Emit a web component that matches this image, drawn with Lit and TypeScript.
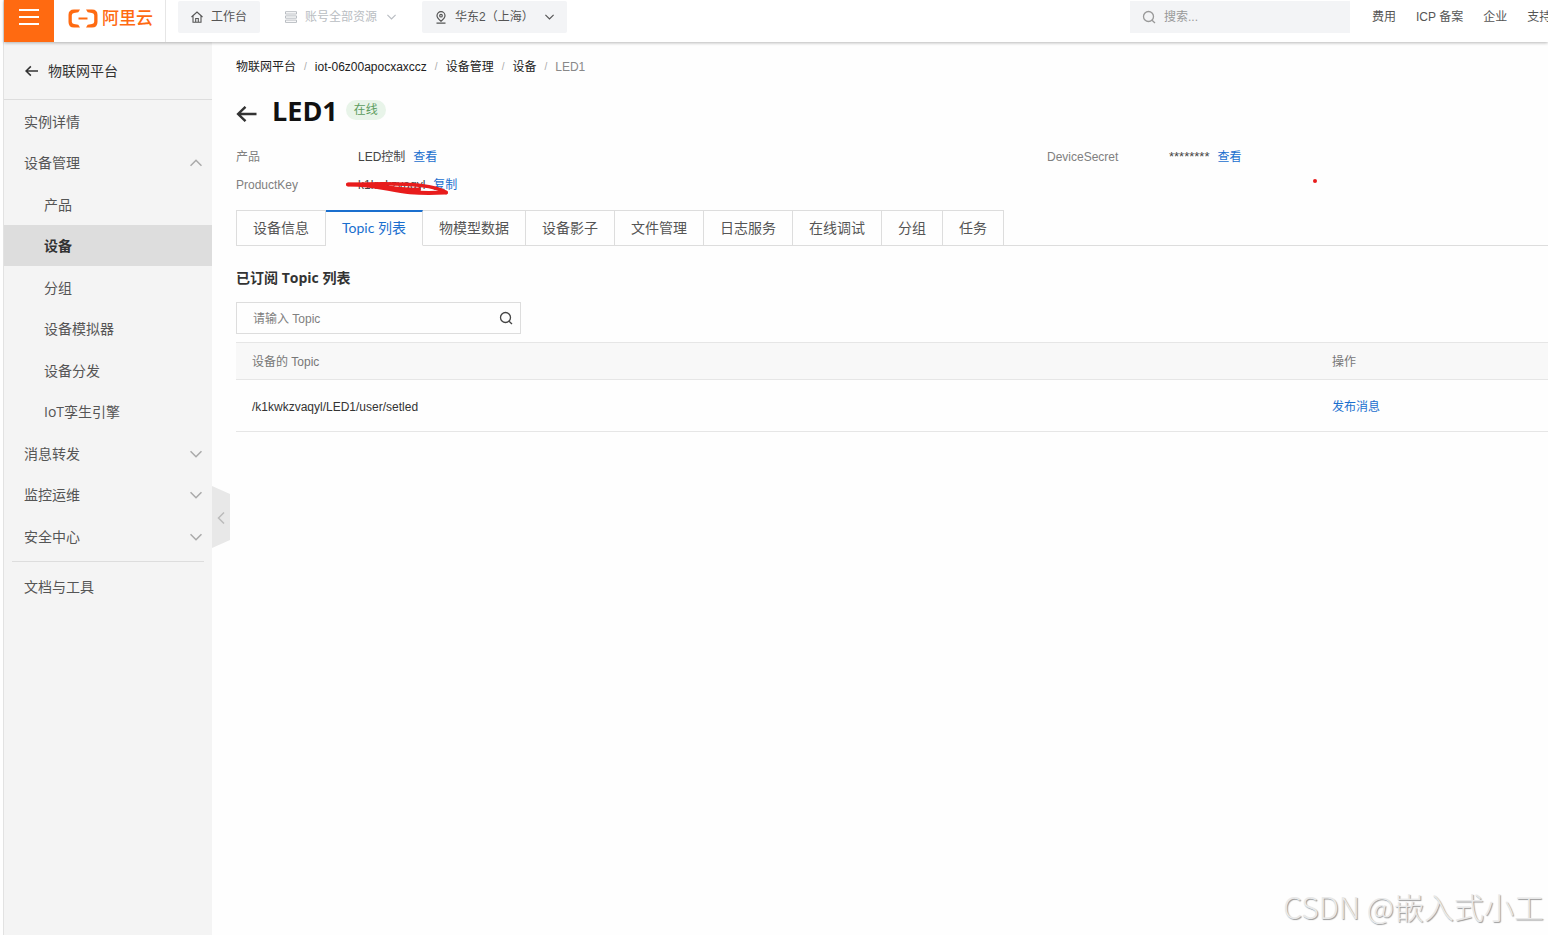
import { LitElement, html, css, svg, nothing } from "lit";
import { customElement, property, state } from "lit/decorators.js";

const chevron = (d: string) => html`
  <svg class="chevron" viewBox="0 0 12 12" width="12" height="12" fill="none" stroke="currentColor" stroke-width="1.6" aria-hidden="true">
    ${svg`<path d=${d}></path>`}
  </svg>
`;
const DOWN = "M0.5 3.2 6 8.7 11.5 3.2";
const UP = "M0.5 8.8 6 3.3 11.5 8.8";

const backArrow = (w: number, h: number) => html`
  <svg viewBox="0 0 20 16" width=${w} height=${h} fill="none" stroke="currentColor" stroke-width="2.4" aria-hidden="true">
    <path d="M9 0.8 1.6 8 9 15.2M1.8 8H20"></path>
  </svg>
`;

const magnifier = html`
  <svg viewBox="0 0 14 14" width="14" height="14" fill="none" stroke="currentColor" stroke-width="1.3" aria-hidden="true">
    <circle cx="6.5" cy="6.5" r="5"></circle>
    <path d="M10 10.2 13 13"></path>
  </svg>
`;

@customElement("top-bar")
class TopBar extends LitElement {
  static styles = css`
    :host {
      display: flex;
      position: relative;
      z-index: 2;
      height: 42px;
      overflow: visible;
      background: #fff;
      box-shadow: 0 1px 3px rgba(0, 0, 0, 0.28);
      font: 12px/32px "Liberation Sans", "Noto Sans CJK SC", sans-serif;
      color: #555;
    }
    button {
      font: inherit;
      color: inherit;
      border: 0;
      padding: 0;
      background: none;
      cursor: pointer;
    }
    a {
      color: inherit;
      text-decoration: none;
      white-space: nowrap;
    }
    .menu {
      flex: none;
      display: flex;
      justify-content: center;
      width: 50px;
      padding-top: 8px;
      background: #ff6a11;
    }
    .logo {
      flex: none;
      display: flex;
      align-items: center;
      gap: 4px;
      width: 112px;
      box-sizing: border-box;
      padding: 0 0 5px 14px;
      border-right: 1px solid #e6e6e6;
      color: #ff6a11;
      font-size: 17px;
      font-weight: 500;
    }
    .tools {
      display: flex;
      gap: 12px;
      padding: 1px 12px;
    }
    .tool {
      display: flex;
      align-items: center;
      gap: 8px;
      height: 32px;
      padding: 0 13px;
      border-radius: 2px;
      background: #f3f4f6;
      white-space: nowrap;
    }
    .plain {
      background: none;
      color: #b9bdc2;
      padding: 0 14px 0 13px;
    }
    .tool .chevron {
      width: 9px;
      margin-left: 2px;
    }
    .region .chevron {
      margin-left: 3px;
    }
    .search {
      display: flex;
      align-items: center;
      gap: 8px;
      width: 220px;
      height: 32px;
      box-sizing: border-box;
      margin: 1px 0 0 auto;
      padding: 0 12px;
      background: #f3f4f6;
      color: #999;
    }
    .search input {
      flex: 1;
      min-width: 0;
      border: 0;
      padding: 0;
      outline: 0;
      background: none;
      font: inherit;
    }
    .search input::placeholder {
      color: #999;
    }
    .links {
      flex: 0 0 198px;
      box-sizing: border-box;
      display: flex;
      gap: 20px;
      padding: 1px 0 0 22px;
      overflow: hidden;
    }
  `;

  render() {
    return html`
      <button class="menu" aria-label="菜单">
        <svg width="20" height="18" viewBox="0 0 20 18" stroke="#fff" stroke-width="2" aria-hidden="true">
          <path d="M0 2H20M0 9H20M0 16H20"></path>
        </svg>
      </button>
      <a class="logo" href="#">
        <svg width="30" height="19" viewBox="0 0 30 19" fill="currentColor" aria-hidden="true">
          <path d="M12 0.5H6Q0.5 0.5 0.5 6V13Q0.5 18.5 6 18.5H12L10.3 15.8 6 15Q3.8 14.6 3.8 12.8V6.2Q3.8 4.4 6 4L10.3 3.2Z"></path>
          <path d="M18 0.5H24Q29.5 0.5 29.5 6V13Q29.5 18.5 24 18.5H18L19.7 15.8 24 15Q26.2 14.6 26.2 12.8V6.2Q26.2 4.4 24 4L19.7 3.2Z"></path>
          <path d="M10.5 8.5H19.5V10.5H10.5Z"></path>
        </svg>
        <span>阿里云</span>
      </a>
      <div class="tools">
        <button class="tool">
          <svg width="12" height="12" viewBox="0 0 12 12" fill="none" stroke="currentColor" stroke-width="1.1" aria-hidden="true">
            <path d="M0.5 6 6 1 11.5 6M2 5V11.3H10V5M4.7 11.3V7.5H7.3V11.3"></path>
          </svg>
          工作台
        </button>
        <button class="tool plain">
          <svg width="12" height="12" viewBox="0 0 12 12" fill="none" stroke="currentColor" aria-hidden="true">
            <path d="M0.5 0.7H11.5V3H0.5ZM0.5 4.9H11.5V7.2H0.5ZM0.5 9.1H11.5V11.4H0.5Z"></path>
          </svg>
          账号全部资源 ${chevron(DOWN)}
        </button>
        <button class="tool region">
          <svg width="12" height="13" viewBox="0 0 12 13" fill="none" stroke="currentColor" stroke-width="1.2" aria-hidden="true">
            <path d="M6 10.2C3.5 8.2 2 6.8 2 4.7A4 4 0 0 1 10 4.7C10 6.8 8.5 8.2 6 10.2ZM1.5 12.2H10.5"></path>
            <circle cx="6" cy="4.7" r="1.3"></circle>
          </svg>
          华东2（上海） ${chevron(DOWN)}
        </button>
      </div>
      <label class="search">${magnifier}<input type="text" placeholder="搜索..." aria-label="搜索" /></label>
      <nav class="links">
        ${["费用", "ICP 备案", "企业", "支持"].map((t) => html`<a href="#">${t}</a>`)}
      </nav>
    `;
  }
}

interface NavEntry {
  label: string;
  open?: boolean;
  group?: boolean;
  children?: string[];
}

const NAV: NavEntry[] = [
  { label: "实例详情" },
  {
    label: "设备管理",
    group: true,
    open: true,
    children: ["产品", "设备", "分组", "设备模拟器", "设备分发", "IoT孪生引擎"],
  },
  { label: "消息转发", group: true },
  { label: "监控运维", group: true },
  { label: "安全中心", group: true },
];

@customElement("side-nav")
class SideNav extends LitElement {
  static styles = css`
    :host {
      display: block;
      position: relative;
      background: #f4f4f4;
      color: #555;
      font: 14px/41px "Open Sans", "Noto Sans CJK SC", sans-serif;
    }
    a {
      display: flex;
      align-items: center;
      justify-content: space-between;
      color: inherit;
      text-decoration: none;
      padding: 0 10px 0 20px;
    }
    .title {
      justify-content: flex-start;
      gap: 10px;
      height: 57px;
      padding-left: 21px;
      border-bottom: 1px solid #ddd;
      color: #333;
    }
    ul {
      list-style: none;
      margin: 0;
      padding: 0;
    }
    .list {
      padding-bottom: 4px;
    }
    li:nth-child(odd) {
      padding-top: 1px;
    }
    .sub a {
      padding-left: 40px;
    }
    .sub .current {
      background: #ddd;
      color: #333;
      font-weight: 700;
    }
    .chevron {
      color: #aaa;
    }
    .docs {
      margin: 0 8px;
      padding: 4px 0 0 12px;
      border-top: 1px solid #ddd;
    }
    .fold {
      position: absolute;
      left: 100%;
      top: 444px;
      width: 18px;
      height: 62px;
      border: 0;
      padding: 0;
      background: #e8e8e8;
      color: #bbb;
      clip-path: polygon(0 0, 100% 8px, 100% 54px, 0 100%);
    }
    .fold svg {
      display: block;
      margin: 2px auto 0;
    }
  `;

  render() {
    return html`
      <a class="title" href="#">${backArrow(13, 12)}物联网平台</a>
      <ul class="list">
        ${NAV.map(
          (n) => html`<li>
            <a href="#">${n.label}${n.group ? chevron(n.open ? UP : DOWN) : nothing}</a>
            ${n.children
              ? html`<ul class="sub">
                  ${n.children.map((c) => html`<li><a class=${c === "设备" ? "current" : ""} href="#">${c}</a></li>`)}
                </ul>`
              : nothing}
          </li>`
        )}
      </ul>
      <a class="docs" href="#">文档与工具</a>
      <button class="fold" aria-label="收起导航">
        <svg width="8" height="12" viewBox="0 0 8 12" fill="none" stroke="currentColor" stroke-width="1.5">
          <path d="M7 0.5 1.5 6 7 11.5"></path>
        </svg>
      </button>
    `;
  }
}

@customElement("device-page")
class DevicePage extends LitElement {
  @state() tab = "Topic 列表";
  @property() name = "LED1";

  static styles = css`
    :host {
      display: block;
      min-width: 0;
      padding: 15px 0 0 24px;
      color: #333;
      font: 12px/20px "Liberation Sans", "Noto Sans CJK SC", sans-serif;
    }
    a {
      color: #1a6fce;
      text-decoration: none;
    }
    .crumbs {
      display: flex;
      gap: 8px;
    }
    .crumbs a {
      color: #222;
    }
    .crumbs span {
      color: #888;
    }
    .crumbs .slash {
      color: #aaa;
      font-size: 10px;
    }
    .heading {
      display: flex;
      align-items: center;
      height: 40px;
      margin-top: 14px;
    }
    .heading .back {
      display: flex;
      margin: 6px 15px 0 0;
      color: #333;
    }
    h1,
    h2 {
      font-family: "Open Sans", "Noto Sans CJK SC", sans-serif;
    }
    h1 {
      margin: 0;
      font-size: 27px;
      line-height: 40px;
      color: #111;
    }
    .status {
      margin: 0 0 2px 8px;
      padding: 0 8px;
      border-radius: 10px;
      background: #e8f4e9;
      color: #5c9c60;
    }
    .facts {
      display: grid;
      grid-template-columns: 811fr 501fr;
      row-gap: 8px;
      margin: 16px 0 0;
    }
    .fact {
      display: flex;
      position: relative;
    }
    dt {
      width: 122px;
      color: #808080;
    }
    dd {
      display: flex;
      gap: 8px;
      margin: 0;
      color: #444;
    }
    .mask {
      font-size: 13px;
    }
    .scribble {
      position: absolute;
      left: 109px;
      top: 4px;
    }
    .dot {
      position: absolute;
      left: 266px;
      top: 32px;
      width: 4px;
      height: 4px;
      border-radius: 2px;
      background: #e81c1c;
    }
    .tabs {
      display: flex;
      margin-top: 15px;
      box-shadow: inset 0 -1px #ddd;
    }
    .tab {
      height: 36px;
      padding: 0 16px;
      border: 1px solid #ddd;
      border-left: 0;
      background: none;
      font: 14px/32px Lato, "Noto Sans CJK SC", sans-serif;
      color: #555;
      white-space: nowrap;
      cursor: pointer;
    }
    .tab:first-child {
      border-left: 1px solid #ddd;
    }
    .tab.active {
      padding-bottom: 1px;
      border-top: 2px solid #1a6fce;
      border-bottom-color: #fefefe;
      color: #1a6fce;
    }
    h2 {
      margin: 22px 0 14px;
      font-size: 14px;
      line-height: 20px;
    }
    .filter {
      display: flex;
      align-items: center;
      width: 285px;
      height: 32px;
      box-sizing: border-box;
      border: 1px solid #ddd;
      padding: 0 7px 0 16px;
      color: #444;
    }
    .filter input {
      flex: 1;
      min-width: 0;
      border: 0;
      padding: 2px 0 0;
      outline: 0;
      background: none;
      font: inherit;
    }
    .filter input::placeholder {
      color: #808080;
    }
    table {
      width: 100%;
      margin-top: 8px;
      border-collapse: collapse;
      table-layout: fixed;
    }
    th,
    td {
      padding: 2px 16px 0;
      border-bottom: 1px solid #e6e6e6;
      text-align: left;
    }
    th {
      height: 34px;
      border-top: 1px solid #e6e6e6;
      background: #f8f8f8;
      color: #777;
      font-weight: 400;
    }
    td {
      height: 49px;
    }
    .ops {
      width: 200px;
    }
  `;

  render() {
    const crumbs = ["物联网平台", "iot-06z00apocxaxccz", "设备管理", "设备"];
    const tabs = ["设备信息", "Topic 列表", "物模型数据", "设备影子", "文件管理", "日志服务", "在线调试", "分组", "任务"];
    return html`
      <nav class="crumbs">
        ${crumbs.map((c) => html`<a href="#">${c}</a><span class="slash">/</span>`)}<span>${this.name}</span>
      </nav>
      <header class="heading">
        <a class="back" href="#" aria-label="返回">${backArrow(21, 16)}</a>
        <h1>${this.name}</h1>
        <span class="status">在线</span>
      </header>
      <dl class="facts">
        <div class="fact"><dt>产品</dt><dd>LED控制 <a href="#">查看</a></dd></div>
        <div class="fact">
          <dt>DeviceSecret</dt><dd><span class="mask">********</span><a href="#">查看</a></dd><i class="dot"></i>
        </div>
        <div class="fact">
          <dt>ProductKey</dt><dd>k1kwkzvaqyl <a href="#">复制</a></dd>
          <svg class="scribble" width="106" height="18" viewBox="0 0 106 18" fill="none" stroke="#e81c1c" stroke-linecap="round" stroke-linejoin="round" aria-hidden="true">
            <path d="M3 5.5C28 4.5 58 4 76 6.5C90 8 97 11 101 13.5" stroke-width="3.5"></path>
            <path d="M3 5.5C28 5 44 11 65 13.2C80 14.5 90 14 101 13.5" stroke-width="4"></path>
            <path d="M32 6.5C48 10 64 11 74 10.5" stroke-width="4"></path>
          </svg>
        </div>
      </dl>
      <div class="tabs" role="tablist">
        ${tabs.map(
          (t) => html`<button
            class="tab ${t === this.tab ? "active" : ""}"
            role="tab"
            aria-selected=${t === this.tab ? "true" : "false"}
            @click=${() => (this.tab = t)}
          >${t}</button>`
        )}
      </div>
      <h2>已订阅 Topic 列表</h2>
      <label class="filter"><input type="text" placeholder="请输入 Topic" aria-label="请输入 Topic" />${magnifier}</label>
      <table>
        <thead>
          <tr><th>设备的 Topic</th><th class="ops">操作</th></tr>
        </thead>
        <tbody>
          <tr><td>/k1kwkzvaqyl/LED1/user/setled</td><td><a href="#">发布消息</a></td></tr>
        </tbody>
      </table>
    `;
  }
}

@customElement("app-root")
class AppRoot extends LitElement {
  static styles = css`
    :host {
      display: flex;
      flex-direction: column;
      position: relative;
      box-sizing: border-box;
      min-height: 100vh;
      padding-left: 3px;
      background: #fefefe;
      overflow: hidden;
    }
    .shell {
      flex: 1;
      display: flex;
      flex-direction: column;
      border-left: 1px solid #e2e2e2;
    }
    .body {
      flex: 1;
      display: grid;
      grid-template-columns: 208px 1fr;
    }
    .watermark {
      position: absolute;
      right: 4px;
      bottom: 7px;
      color: #e9e9e9;
      font: 300 30px/44px "Noto Sans CJK SC", sans-serif;
      text-shadow: 1px 1px 1px #999;
    }
  `;

  render() {
    return html`
      <div class="shell">
        <top-bar></top-bar>
        <div class="body">
          <side-nav></side-nav>
          <device-page></device-page>
        </div>
      </div>
      <div class="watermark">CSDN @嵌入式小工</div>
    `;
  }
}
